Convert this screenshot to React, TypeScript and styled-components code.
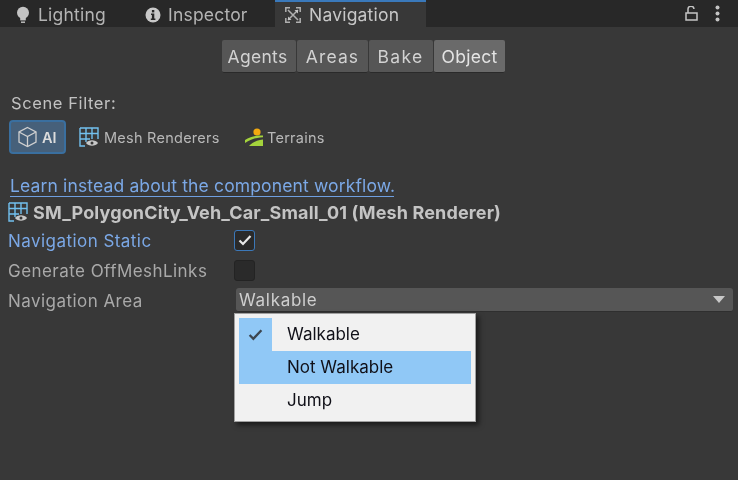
import React from "react";
import styled, { createGlobalStyle } from "styled-components";

const Global = createGlobalStyle`
  html, body { margin: 0; padding: 0; background: #383838; }
  body { font-family: Inter, "Liberation Sans", sans-serif; }
  #root { width: 738px; height: 480px; overflow: hidden; }
`;

const Page = styled.div`
  width: 738px; height: 480px; background: #383838; color: #c4c4c4;
  display: flex; flex-direction: column; position: relative; overflow: hidden;
  font-size: 17px; filter: blur(0.5px);
`;
const TabBar = styled.div`
  height: 27px; background: #282828; display: flex; align-items: stretch; flex: none;
`;
const Tab = styled.div<{ $w: number; $active?: boolean; $pad: number; $gap: number }>`
  width: ${p => p.$w}px; padding-left: ${p => p.$pad}px; box-sizing: border-box;
  display: flex; align-items: center; gap: ${p => p.$gap}px; font-size: 17.5px; letter-spacing: 0.2px;
  color: ${p => (p.$active ? "#c8c8c8" : "#b4b4b4")};
  background: ${p => (p.$active ? "#383838" : "transparent")};
  border-top: ${p => (p.$active ? "2px solid #3a79bb" : "2px solid transparent")};
`;
const TabIcons = styled.div`
  margin-left: auto; display: flex; align-items: center; gap: 17px; padding-right: 18px;
`;
const Toolbar = styled.div`
  display: flex; gap: 1px; margin: 13px 0 0 222px; height: 33px;
`;
const ToolButton = styled.div<{ $w: number; $on?: boolean; $ls: number; $shift?: number }>`
  width: ${p => p.$w}px; display: flex; align-items: center; justify-content: center;
  padding-right: ${p => p.$shift ?? 0}px;
  background: ${p => (p.$on ? "#6a6a6a" : "#565656")}; border-radius: 2px;
  border-bottom: 1px solid #2a2a2a; box-sizing: border-box;
  font-size: 17.5px; letter-spacing: ${p => p.$ls}px; color: ${p => (p.$on ? "#e4e4e4" : "#d2d2d2")};
`;
const FilterLabel = styled.div`
  margin: 20px 0 0 11px; line-height: 21px; font-size: 16.5px; color: #c2c2c2; letter-spacing: 0.6px;
`;
const FilterRow = styled.div`
  display: flex; align-items: center; margin: 6px 0 0 9px; height: 34px;
`;
const AIButton = styled.div`
  width: 57px; height: 34px; box-sizing: border-box; display: flex; align-items: center;
  padding-left: 6px; gap: 4px; background: #46607a; border: 2px solid #3a6f9f; border-radius: 4px;
  font-size: 14.5px; font-weight: 600; color: #dcdcdc;
`;
const FilterItem = styled.div<{ $w: number; $ml: number; $gap: number }>`
  width: ${p => p.$w}px; margin-left: ${p => p.$ml}px; display: flex; align-items: center; gap: ${p => p.$gap}px;
  font-size: 14.5px; letter-spacing: 0.25px; color: #b8b8b8; white-space: nowrap; overflow: hidden;
`;
const LinkLine = styled.div`
  margin: 21px 0 0 10px; width: 384px; height: 21px; line-height: 21px; white-space: nowrap;
  font-size: 17.5px; letter-spacing: 0.14px; color: #7ba8e6; border-bottom: 1px solid #6f9fe0;
`;
const TitleRow = styled.div`
  display: flex; align-items: center; gap: 5px; margin: 3px 0 0 8px; height: 24px;
  font-size: 18px; font-weight: 700; letter-spacing: 0.14px; color: #c4c4c4; white-space: nowrap;
`;
const PropList = styled.div`
  margin-top: 2px; display: flex; flex-direction: column;
`;
const PropRow = styled.div`
  display: grid; grid-template-columns: 227px 1fr; align-items: center; margin: 0 5px 0 8px; height: 30px;
`;
const PropLabel = styled.div<{ $blue?: boolean }>`
  font-size: 17px; color: ${p => (p.$blue ? "#7ba8e6" : "#a9a9a9")}; letter-spacing: 0.45px;
`;
const Check = styled.div<{ $on?: boolean }>`
  width: 21px; height: 21px; box-sizing: border-box; border-radius: 3px; background: #2a2a2a;
  border: 1px solid ${p => (p.$on ? "#3c78b8" : "#232323")};
  display: flex; align-items: center; justify-content: center; margin: 0 0 2px -1px;
`;
const Dropdown = styled.div`
  height: 24px; margin: 0 0 2px 1px; background: #565656; border-radius: 3px; display: flex; align-items: center;
  padding: 0 8px 0 3px; font-size: 17px; letter-spacing: 0.7px; color: #cfcfcf; justify-content: space-between;
  border-bottom: 1px solid #2f2f2f; box-sizing: border-box;
`;
const Caret = styled.div`
  width: 0; height: 0; border-left: 6px solid transparent; border-right: 6px solid transparent;
  border-top: 7px solid #c8c8c8;
`;
const Menu = styled.div`
  position: absolute; left: 234px; top: 313px; width: 242px; height: 109px; box-sizing: border-box;
  background: #f1f1f1; border: 1px solid #a0a0a0; padding: 4px;
  box-shadow: 3px 3px 5px rgba(0, 0, 0, 0.55);
  display: flex; flex-direction: column; color: #101018;
`;
const MenuItem = styled.div<{ $hover?: boolean }>`
  height: 33px; flex: none; display: flex; align-items: center; font-size: 17px;
  background: ${p => (p.$hover ? "#90c8f6" : "transparent")};
`;
const MenuMark = styled.div<{ $on?: boolean }>`
  width: 33px; height: 33px; margin-right: 15px; display: flex; align-items: center; justify-content: center;
  background: ${p => (p.$on ? "#90c8f6" : "transparent")};
`;
const MenuText = styled.span`
  position: relative; top: -1px;
`;

const BulbIcon = () => (
  <svg width="15" height="18" viewBox="0 0 15 18">
    <circle cx="7" cy="6.8" r="6" fill="#c4c4c4" />
    <path d="M4.2 11h5.6v3.4H4.2z" fill="#c4c4c4" />
    <path d="M5 16.2h4" stroke="#c4c4c4" strokeWidth="1.4" />
  </svg>
);
const InfoIcon = () => (
  <svg width="16" height="16" viewBox="0 0 16 16">
    <circle cx="8" cy="8" r="7.5" fill="#c8c8c8" />
    <rect x="6.9" y="3" width="2.4" height="2.4" fill="#282828" />
    <path d="M6 6.6h3.3v5h1.1v1.4H5.8v-1.4h1.1V8H6z" fill="#282828" />
  </svg>
);
const NavIcon = () => (
  <svg width="16" height="16" viewBox="0 0 16 16" fill="none" stroke="#b0b0b0" strokeWidth="1.5">
    <path d="M.8 5V.8h4.2M11 .8h4.2V5M15.2 11v4.2H11M5 15.2H.8V11" />
    <path d="M3 3l10 10M13 3L3 13" />
    <path d="M9.5 3H13v3.5zM6.5 13H3V9.5z" fill="#c8c8c8" stroke="none" />
  </svg>
);
const LockIcon = () => (
  <svg width="13" height="15" viewBox="0 0 13 15" fill="none" stroke="#c4c4c4" strokeWidth="1.5">
    <rect x="1" y="7" width="11" height="7" />
    <path d="M3 7V3.5a3 3 0 0 1 6 -0.5" />
  </svg>
);
const DotsIcon = () => (
  <svg width="5" height="17" viewBox="0 0 5 17" fill="#c4c4c4">
    <circle cx="2.5" cy="2.5" r="2" />
    <circle cx="2.5" cy="8.5" r="2" />
    <circle cx="2.5" cy="14.5" r="2" />
  </svg>
);
const CubeIcon = () => (
  <svg width="21" height="22" viewBox="0 0 21 22" fill="none" stroke="#d0d0d0" strokeWidth="1.3">
    <path d="M10.5 1.5l8.5 4.5v10l-8.5 4.5L2 16V6z" />
    <path d="M2 6l8.5 4.5L19 6M10.5 10.5v10" />
  </svg>
);
const MeshIcon = () => (
  <svg width="20" height="20" viewBox="0 0 20 20" fill="none">
    <path d="M1 1h18v11M1 1v18h5M1 6.5h18M1 12h10M7 1v14M13 1v11" stroke="#72c0ee" strokeWidth="1.4" />
    <path d="M7 16c2.4-3.6 9.6-3.6 12 0-2.4 3.6-9.6 3.6-12 0z" fill="#c8c8c8" />
    <circle cx="13" cy="16" r="1.5" fill="#383838" />
  </svg>
);
const TerrainIcon = () => (
  <svg width="20" height="20" viewBox="0 0 20 20">
    <circle cx="13" cy="5" r="3.6" fill="#f2a90f" />
    <path d="M1 13c4-3 10-4.6 18-4.4v1.6C12 10.4 6 12.8 1 16z" fill="#a4d33c" />
    <path d="M5 19c3-3.6 8-6 14-6.6V19z" fill="#a4d33c" />
  </svg>
);
const CheckMark = ({ color, size }: { color: string; size: number }) => (
  <svg width={size} height={size} viewBox="0 0 14 14" fill="none" stroke={color} strokeWidth="2.2">
    <path d="M1.5 7.5l3.5 3.5 7.5 -8" />
  </svg>
);

export default function App() {
  return (
    <Page>
      <Global />
      <TabBar>
        <Tab $w={137} $pad={16} $gap={7}><BulbIcon />Lighting</Tab>
        <Tab $w={138} $pad={8} $gap={7}><InfoIcon />Inspector</Tab>
        <Tab $w={151} $pad={10} $gap={8} $active><NavIcon />Navigation</Tab>
        <TabIcons><LockIcon /><DotsIcon /></TabIcons>
      </TabBar>
      <Toolbar>
        <ToolButton $w={74} $ls={0.3} $shift={3}>Agents</ToolButton>
        <ToolButton $w={71} $ls={1.1}>Areas</ToolButton>
        <ToolButton $w={64} $ls={1.3} $shift={1}>Bake</ToolButton>
        <ToolButton $w={71} $ls={0.3} $on>Object</ToolButton>
      </Toolbar>
      <FilterLabel>Scene Filter:</FilterLabel>
      <FilterRow>
        <AIButton><CubeIcon />AI</AIButton>
        <FilterItem $w={141} $ml={13} $gap={5}><MeshIcon />Mesh Renderers</FilterItem>
        <FilterItem $w={90} $ml={24} $gap={3}><TerrainIcon />Terrains</FilterItem>
      </FilterRow>
      <LinkLine>Learn instead about the component workflow.</LinkLine>
      <TitleRow><MeshIcon />SM_PolygonCity_Veh_Car_Small_01 (Mesh Renderer)</TitleRow>
      <PropList>
        <PropRow>
          <PropLabel $blue>Navigation Static</PropLabel>
          <Check $on><CheckMark color="#e8e8e8" size={14} /></Check>
        </PropRow>
        <PropRow>
          <PropLabel>Generate OffMeshLinks</PropLabel>
          <Check />
        </PropRow>
        <PropRow>
          <PropLabel>Navigation Area</PropLabel>
          <Dropdown>Walkable<Caret /></Dropdown>
        </PropRow>
      </PropList>
      <Menu>
        <MenuItem><MenuMark $on><CheckMark color="#3c4650" size={15} /></MenuMark><MenuText>Walkable</MenuText></MenuItem>
        <MenuItem $hover><MenuMark /><MenuText>Not Walkable</MenuText></MenuItem>
        <MenuItem><MenuMark /><MenuText>Jump</MenuText></MenuItem>
      </Menu>
    </Page>
  );
}
